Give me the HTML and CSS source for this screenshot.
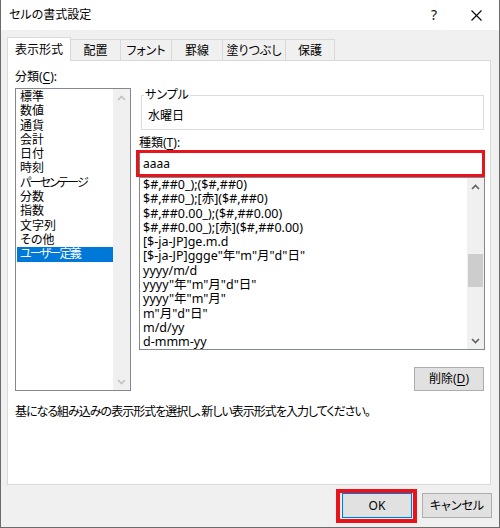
FILE: index.html
```html
<!DOCTYPE html>
<html lang="ja">
<head>
    <meta charset="UTF-8">
    <title>セルの書式設定</title>
    <link rel="stylesheet" href="styles.css">
</head>
<body>
    <div class="dialog">
        <div class="titlebar">
            <span class="title">セルの書式設定</span>
            <span class="title-btn help">?</span>
            <span class="title-btn close">
                <svg width="11" height="11" viewBox="0 0 11 11"><path d="M0.5 0.5 L10.5 10.5 M10.5 0.5 L0.5 10.5" stroke="#000" stroke-width="1.1" fill="none"/></svg>
            </span>
        </div>

        <div class="tabs">
            <div class="tab active w64">表示形式</div>
            <div class="tab w51">配置</div>
            <div class="tab w52">フォント</div>
            <div class="tab w52">罫線</div>
            <div class="tab w64">塗りつぶし</div>
            <div class="tab w50">保護</div>
        </div>

        <div class="panel">
            <div class="panel-main">
                <div class="col-left">
                    <div class="label">分類(<u>C</u>):</div>
                    <div class="listbox category-list">
                        <ul class="items">
                            <li>標準</li>
                            <li>数値</li>
                            <li>通貨</li>
                            <li>会計</li>
                            <li>日付</li>
                            <li>時刻</li>
                            <li class="kana">パーセンテージ</li>
                            <li>分数</li>
                            <li>指数</li>
                            <li>文字列</li>
                            <li>その他</li>
                            <li class="kana selected">ユーザー定義</li>
                        </ul>
                        <div class="scrollbar disabled">
                            <div class="arrow"><svg width="9" height="6" viewBox="0 0 9 6"><polyline points="1,5 4.5,1.5 8,5" /></svg></div>
                            <div class="track"></div>
                            <div class="arrow"><svg width="9" height="6" viewBox="0 0 9 6"><polyline points="1,1 4.5,4.5 8,1" /></svg></div>
                        </div>
                    </div>
                </div>

                <div class="col-right">
                    <fieldset class="sample">
                        <legend>サンプル</legend>
                        <div>水曜日</div>
                    </fieldset>

                    <div class="label type-label">種類(<u>T</u>):</div>
                    <div class="type-input">
                        aaaa
                        <div class="mark mark-input"></div>
                    </div>

                    <div class="listbox format-list">
                        <ul class="items">
                            <li>$#,##0_);($#,##0)</li>
                            <li>$#,##0_);[赤]($#,##0)</li>
                            <li>$#,##0.00_);($#,##0.00)</li>
                            <li>$#,##0.00_);[赤]($#,##0.00)</li>
                            <li>[$-ja-JP]ge.m.d</li>
                            <li>[$-ja-JP]ggge"年"m"月"d"日"</li>
                            <li>yyyy/m/d</li>
                            <li>yyyy"年"m"月"d"日"</li>
                            <li>yyyy"年"m"月"</li>
                            <li>m"月"d"日"</li>
                            <li>m/d/yy</li>
                            <li>d-mmm-yy</li>
                        </ul>
                        <div class="scrollbar">
                            <div class="arrow"><svg width="9" height="6" viewBox="0 0 9 6"><polyline points="1,5 4.5,1.5 8,5" /></svg></div>
                            <div class="track"><div class="thumb"></div></div>
                            <div class="arrow"><svg width="9" height="6" viewBox="0 0 9 6"><polyline points="1,1 4.5,4.5 8,1" /></svg></div>
                        </div>
                    </div>

                    <div class="delete-row">
                        <button class="btn">削除(<u>D</u>)</button>
                    </div>
                </div>
            </div>

            <p class="hint">基になる組み込みの表示形式を選択し、新しい表示形式を入力してください。</p>
        </div>

        <div class="footer">
            <div class="ok-wrap">
                <button class="btn default">OK</button>
                <div class="mark mark-ok"></div>
            </div>
            <button class="btn">キャンセル</button>
        </div>
    </div>
</body>
</html>
```

FILE: styles.css
```css
* {
    box-sizing: border-box;
}

body {
    margin: 0;
    font-family: "Noto Sans", "Noto Sans CJK JP", sans-serif;
    font-size: 12px;
    line-height: 14px;
    color: #000;
    font-feature-settings: "palt";
}

.dialog {
    width: 500px;
    height: 528px;
    border: 1px solid #6b6b6b;
    border-top: none;
    background: #f0f0f0;
    display: flex;
    flex-direction: column;
}

/* title bar */
.titlebar {
    height: 30px;
    background: #fff;
    display: flex;
    align-items: center;
    padding-left: 8px;
    flex: none;
}

.title {
    flex: 1;
}

.title-btn {
    height: 30px;
    display: flex;
    align-items: center;
    justify-content: center;
}

.help {
    width: 40px;
    font-size: 14px;
    color: #111;
}

.close {
    width: 45px;
}

/* tabs */
.tabs {
    height: 30px;
    display: flex;
    align-items: flex-end;
    padding-left: 6px;
    flex: none;
}

.tab {
    height: 21px;
    border: 1px solid #d9d9d9;
    border-bottom: none;
    margin-left: -1px;
    display: flex;
    align-items: center;
    justify-content: center;
    padding-top: 1px;
    white-space: nowrap;
}

.tab.active {
    height: 24px;
    margin-left: 0;
    margin-bottom: -1px;
    background: #fff;
    position: relative;
    z-index: 1;
    padding-top: 0;
}

.w50 { width: 50px; }
.w51 { width: 51px; }
.w52 { width: 52px; }
.w64 { width: 64px; }

/* panel */
.panel {
    margin-left: 6px;
    width: 484px;
    height: 425px;
    background: #fff;
    border: 1px solid #d9d9d9;
    padding: 9px 5px 0 7px;
    flex: none;
}

.panel-main {
    display: flex;
    gap: 8px;
}

.col-left {
    width: 116px;
    flex: none;
}

.col-right {
    flex: 1;
    display: flex;
    flex-direction: column;
}

u {
    text-decoration-thickness: 1px;
    text-underline-offset: 2px;
}

/* list boxes */
.listbox {
    border: 1px solid #828790;
    display: flex;
    background: #fff;
    overflow: hidden;
}

.category-list {
    margin-top: 4px;
    height: 303px;
}

.items {
    list-style: none;
    margin: 0;
    padding: 1px 0 0 0;
    flex: 1;
    overflow: hidden;
    line-height: 14.3px;
}

.items li {
    padding-left: 3px;
    white-space: nowrap;
}

.category-list .items li {
    margin-left: 1px;
}

.category-list .items li.kana {
    letter-spacing: -1.8px;
}

.items li.selected {
    background: #0078d7;
    color: #fff;
}

.scrollbar {
    width: 17px;
    flex: none;
    background: #f0f0f0;
    display: flex;
    flex-direction: column;
}

.scrollbar .arrow {
    height: 17px;
    display: flex;
    align-items: center;
    justify-content: center;
}

.scrollbar polyline {
    fill: none;
    stroke: #606060;
    stroke-width: 1.6;
}

.scrollbar.disabled polyline {
    stroke: #c1c1c1;
}

.scrollbar .track {
    flex: 1;
    padding: 0 1px;
}

.thumb {
    margin-top: 59px;
    height: 33px;
    background: #cdcdcd;
}

/* sample group */
.sample {
    margin: 18px 1px 0 2px;
    border: 1px solid #dcdcdc;
    padding: 7px 6px 6px 6px;
    min-width: 0;
}

.sample legend {
    padding: 0 1px;
    margin-left: -4px;
    line-height: 14px;
}

.type-label {
    margin-top: 6px;
}

.type-input {
    position: relative;
    margin-top: 1px;
    height: 25px;
    border: 1px solid #7a7a7a;
    padding-left: 3px;
    display: flex;
    align-items: center;
}

.format-list {
    margin-top: 1px;
    height: 173px;
}

.format-list .items {
    padding-top: 0;
    font-size: 12.5px;
}

.delete-row {
    display: flex;
    justify-content: flex-end;
    margin: 17px 1px 0 0;
}

/* buttons */
.btn {
    width: 70px;
    height: 24px;
    background: #e1e1e1;
    border: 1px solid #adadad;
    font: inherit;
    color: #000;
    padding: 0;
}

.btn.default {
    border-color: #0078d7;
    box-shadow: inset 0 0 0 1px #cce4f7;
}

.hint {
    margin: 14px 0 0 0;
    letter-spacing: -1px;
}

.footer {
    display: flex;
    justify-content: flex-end;
    gap: 10px;
    padding: 8px 7px 0 0;
}

.footer .btn {
    height: 25px;
}

.ok-wrap {
    position: relative;
}

/* red annotation boxes */
.mark {
    position: absolute;
    pointer-events: none;
}

.mark-input {
    left: -4px;
    right: -1px;
    top: -2px;
    bottom: -2px;
    border: 3px solid #e8141c;
}

.mark-ok {
    left: -6px;
    right: -5px;
    top: -4px;
    bottom: -5px;
    border: 4px solid #e8141c;
}
```
